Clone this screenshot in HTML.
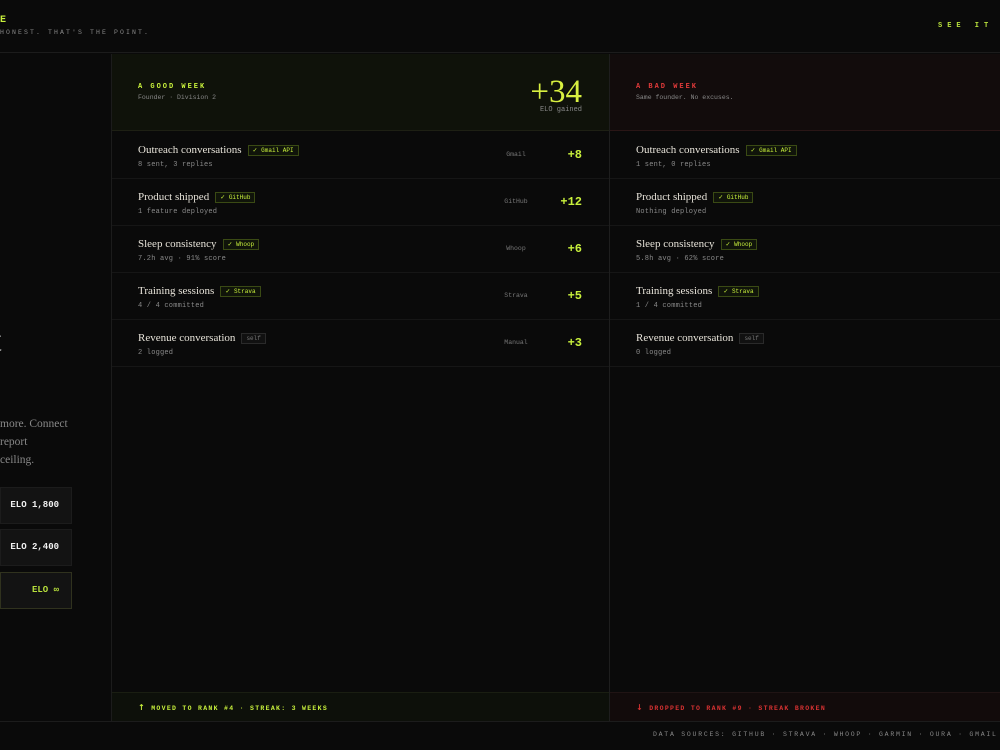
<!DOCTYPE html>
<html><head><style>
*{margin:0;padding:0;box-sizing:border-box}
body{width:1000px;height:750px;background:#0a0a0a;overflow:hidden;position:relative;font-family:"Liberation Mono","DejaVu Sans Mono",monospace;color:#ddd}
.abs{position:absolute}
.mono{font-family:"Liberation Mono","DejaVu Sans Mono",monospace}
.serif{font-family:"Liberation Serif",serif}
.row{position:absolute;left:0;right:0;height:47px;border-bottom:1px solid #161616}
.t{position:absolute;left:26px;top:12px;font-family:"Liberation Serif",serif;font-size:11px;color:#e8e4da;white-space:nowrap}
.s{position:absolute;left:26px;top:29px;font-size:7px;color:#8a8a8a;white-space:nowrap;letter-spacing:.2px}
.tag{display:inline-block;margin-left:6px;font-family:"Liberation Mono",monospace;font-size:6px;color:#c8f03c;border:1px solid #3a4a14;background:#10140a;padding:1px 4px;vertical-align:1px}
.tag.g{color:#777;border-color:#2a2a2a;background:#111}
.src{position:absolute;left:384px;width:40px;text-align:center;top:19px;font-size:6.5px;color:#777}
.pts{position:absolute;right:27px;top:16px;font-size:12px;font-weight:bold;color:#c8f03c}
.elo{position:absolute;left:0;width:72px;height:37px;background:#131313;border:1px solid #1c1c1c;font-size:9px;font-weight:bold;color:#f0f0f0;text-align:right;padding-right:12px;line-height:35px;white-space:nowrap}
.ar{font-family:"DejaVu Sans",sans-serif;font-size:8px}
</style></head><body>
<div class="abs" style="left:0;top:0;width:1000px;height:53px;border-bottom:1px solid #1c1c1c"></div>
<div class="abs mono" style="left:0;top:15px;font-size:10px;font-weight:bold;color:#c8f03c">E</div>
<div class="abs mono" style="left:0;top:29px;font-size:6.5px;color:#888;letter-spacing:2.1px;white-space:nowrap">HONEST. THAT'S THE POINT.</div>
<div class="abs mono" style="left:938px;top:22px;font-size:7px;font-weight:bold;color:#b8e03c;letter-spacing:5px;white-space:nowrap">SEE IT IN</div>

<div class="abs" style="left:111px;top:54px;width:1px;height:667px;background:#1c1c1c"></div>
<div class="abs" style="left:609px;top:54px;width:1px;height:667px;background:#1e1e1e"></div>

<div class="abs serif" style="left:-8px;top:322px;font-size:34px;color:#bbb">t</div>
<div class="abs serif" style="left:0;top:415px;font-size:11.5px;color:#888;line-height:18px;white-space:nowrap">more. Connect<br>report<br>ceiling.</div>
<div class="elo" style="top:487px">ELO 1,800</div>
<div class="elo" style="top:529px">ELO 2,400</div>
<div class="elo" style="top:572px;border-color:#30321e;color:#b8e03c">ELO ∞</div>

<!-- good column -->
<div class="abs" style="left:112px;top:54px;width:497px;height:667px">
 <div class="abs" style="left:0;top:0;right:0;height:77px;background:#0f120a;border-bottom:1px solid #1e2014"></div>
 <div class="abs" style="left:26px;top:29px;font-size:7px;font-weight:bold;color:#c8f03c;letter-spacing:2px">A GOOD WEEK</div>
 <div class="abs" style="left:26px;top:40px;font-size:6.5px;color:#888">Founder · Division 2</div>
 <div class="abs serif" style="right:27px;top:21px;font-size:33px;color:#d8f040;line-height:34px">+34</div>
 <div class="abs" style="right:27px;top:52px;font-size:7px;color:#888">ELO gained</div>
 <div class="row" style="top:78px"><div class="t">Outreach conversations<span class="tag">✓ Gmail API</span></div><div class="s">8 sent, 3 replies</div><div class="src">Gmail</div><div class="pts">+8</div></div>
 <div class="row" style="top:125px"><div class="t">Product shipped<span class="tag">✓ GitHub</span></div><div class="s">1 feature deployed</div><div class="src">GitHub</div><div class="pts">+12</div></div>
 <div class="row" style="top:172px"><div class="t">Sleep consistency<span class="tag">✓ Whoop</span></div><div class="s">7.2h avg · 91% score</div><div class="src">Whoop</div><div class="pts">+6</div></div>
 <div class="row" style="top:219px"><div class="t">Training sessions<span class="tag">✓ Strava</span></div><div class="s">4 / 4 committed</div><div class="src">Strava</div><div class="pts">+5</div></div>
 <div class="row" style="top:266px"><div class="t">Revenue conversation<span class="tag g">self</span></div><div class="s">2 logged</div><div class="src">Manual</div><div class="pts">+3</div></div>
 <div class="abs" style="left:0;right:0;top:638px;height:29px;background:#0d100a;border-top:1px solid #1a1e12"></div>
 <div class="abs" style="left:26px;top:649px;font-size:6.5px;font-weight:bold;color:#c8f03c;letter-spacing:1.3px;white-space:nowrap"><span class="ar">↑</span> MOVED TO RANK #4 · STREAK: 3 WEEKS</div>
</div>

<!-- bad column -->
<div class="abs" style="left:610px;top:54px;width:390px;height:667px">
 <div class="abs" style="left:0;top:0;right:0;height:77px;background:#120c0c;border-bottom:1px solid #2a1616"></div>
 <div class="abs" style="left:26px;top:29px;font-size:7px;font-weight:bold;color:#e03a3a;letter-spacing:2px">A BAD WEEK</div>
 <div class="abs" style="left:26px;top:40px;font-size:6.5px;color:#888">Same founder. No excuses.</div>
 <div class="row" style="top:78px"><div class="t">Outreach conversations<span class="tag">✓ Gmail API</span></div><div class="s">1 sent, 0 replies</div></div>
 <div class="row" style="top:125px"><div class="t">Product shipped<span class="tag">✓ GitHub</span></div><div class="s">Nothing deployed</div></div>
 <div class="row" style="top:172px"><div class="t">Sleep consistency<span class="tag">✓ Whoop</span></div><div class="s">5.8h avg · 62% score</div></div>
 <div class="row" style="top:219px"><div class="t">Training sessions<span class="tag">✓ Strava</span></div><div class="s">1 / 4 committed</div></div>
 <div class="row" style="top:266px"><div class="t">Revenue conversation<span class="tag g">self</span></div><div class="s">0 logged</div></div>
 <div class="abs" style="left:0;right:0;top:638px;height:29px;background:#120b0b;border-top:1px solid #201414"></div>
 <div class="abs" style="left:26px;top:649px;font-size:6.5px;font-weight:bold;color:#d83232;letter-spacing:1.3px;white-space:nowrap"><span class="ar">↓</span> DROPPED TO RANK #9 · STREAK BROKEN</div>
</div>

<div class="abs" style="left:0;top:721px;width:1000px;height:1px;background:#1c1c1c"></div>
<div class="abs" style="left:653px;top:731px;font-size:6.5px;color:#888;letter-spacing:1.75px;white-space:nowrap">DATA SOURCES: GITHUB · STRAVA · WHOOP · GARMIN · OURA · GMAIL</div>
</body></html>
